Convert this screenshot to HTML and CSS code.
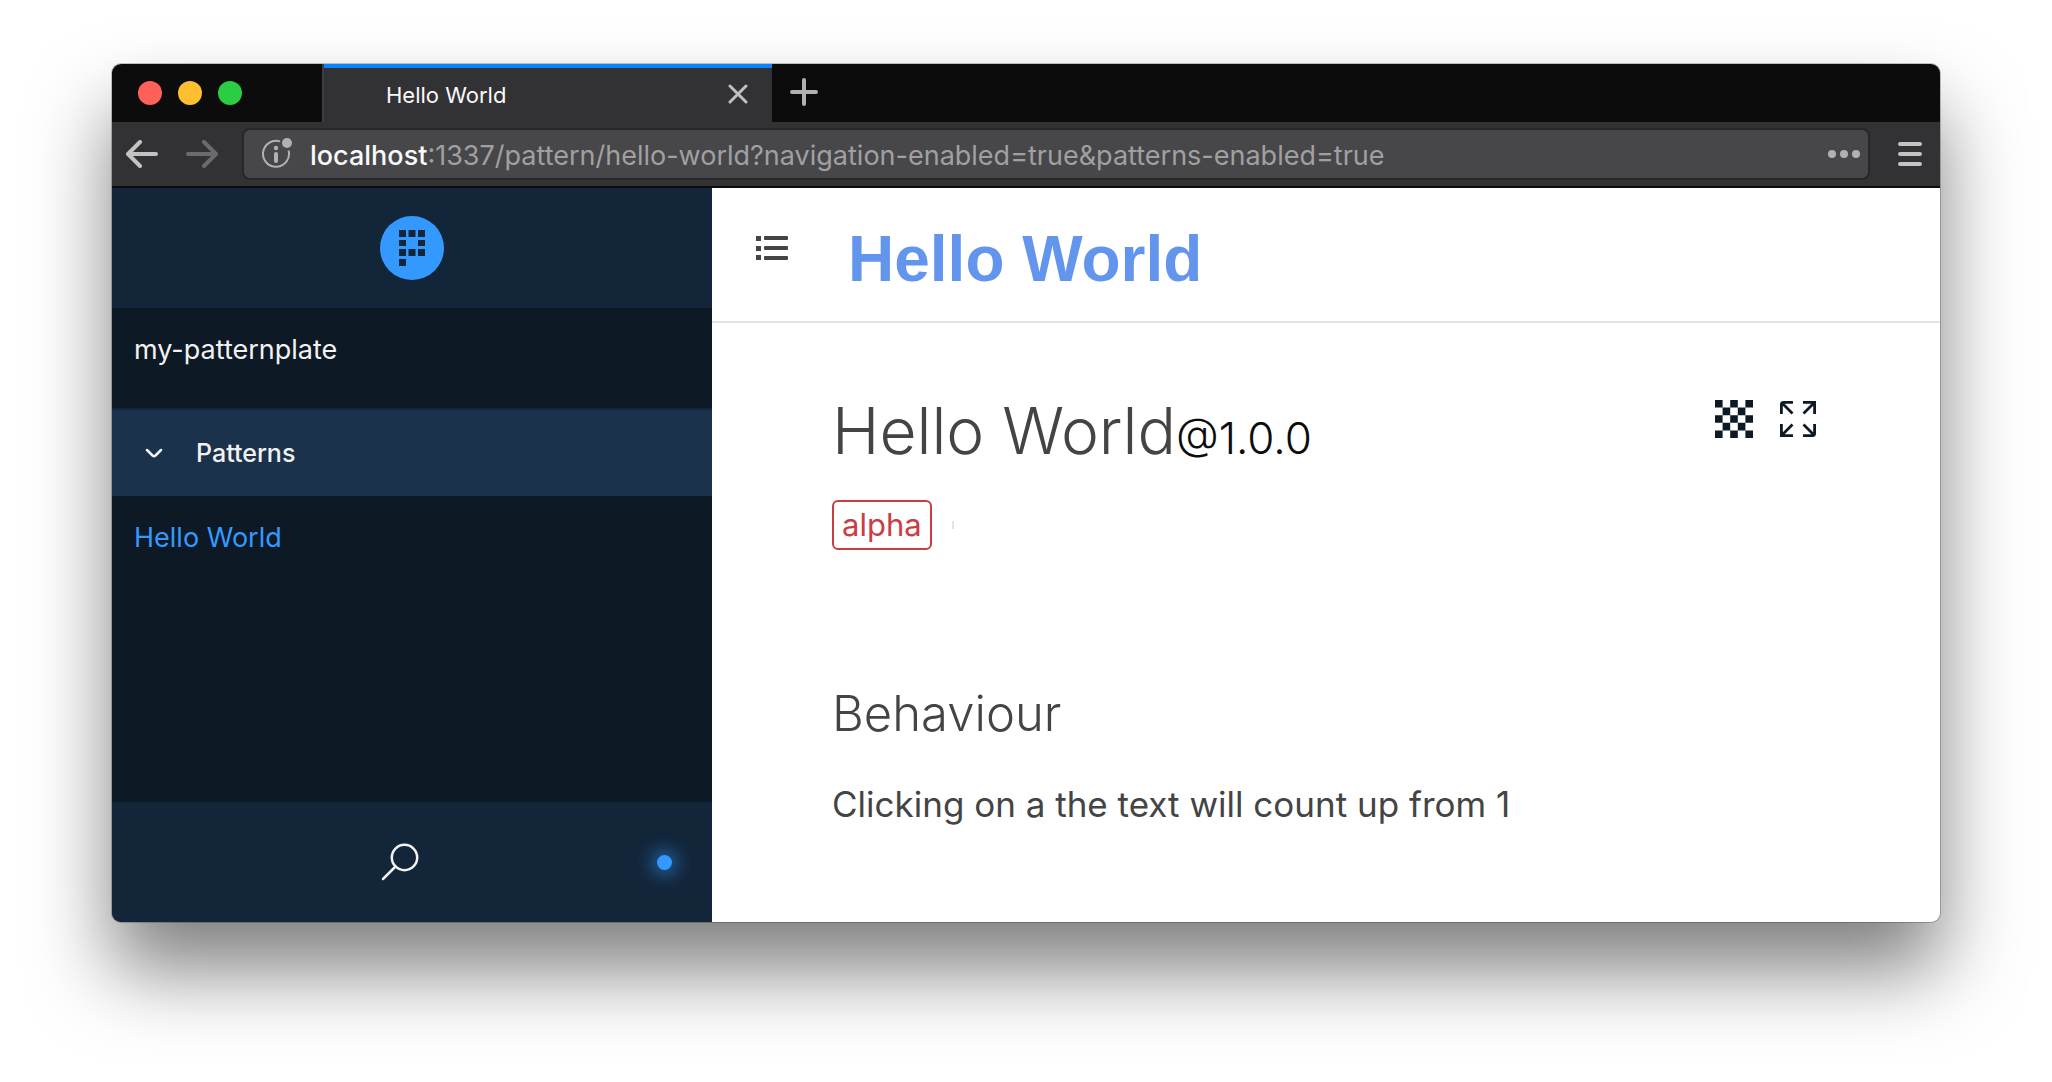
FILE: index.html
```html
<!DOCTYPE html>
<html lang="en">
<head>
<meta charset="utf-8">
<title>Hello World</title>
<link rel="stylesheet" href="styles.css">
</head>
<body>
<div class="window">
  <div class="tabbar">
    <div class="lights">
      <button class="light light-close" aria-label="Close window"></button>
      <button class="light light-min" aria-label="Minimise window"></button>
      <button class="light light-max" aria-label="Zoom window"></button>
    </div>
    <div class="tab">
      <span class="tab-title">Hello World</span>
      <button class="icon-button" aria-label="Close tab">
        <svg width="20" height="20" viewBox="0 0 20 20" fill="none" stroke="#c0c0c1" stroke-width="3" stroke-linecap="round"><path d="M2 2l16 16M18 2L2 18"/></svg>
      </button>
    </div>
    <button class="icon-button new-tab" aria-label="New tab">
      <svg width="28" height="28" viewBox="0 0 28 28" fill="none" stroke="#b1b1b2" stroke-width="4" stroke-linecap="round"><path d="M14 2v24M2 14h24"/></svg>
    </button>
  </div>
  <div class="toolbar">
    <button class="icon-button" aria-label="Back">
      <svg width="32" height="28" viewBox="0 0 32 28" fill="none" stroke="#c3c3c4" stroke-width="4" stroke-linecap="round" stroke-linejoin="round"><path d="M30 14H3M14 2L2 14l12 12"/></svg>
    </button>
    <button class="icon-button forward" aria-label="Forward">
      <svg width="32" height="28" viewBox="0 0 32 28" fill="none" stroke="#6b6b6d" stroke-width="4" stroke-linecap="round" stroke-linejoin="round"><path d="M2 14h27M18 2l12 12-12 12"/></svg>
    </button>
    <div class="address">
      <button class="icon-button" aria-label="Site information">
        <svg width="30" height="32" viewBox="0 0 30 32"><path d="M18 3.400A13 13 0 1 0 26.600 12.500" fill="none" stroke="#b1b1b3" stroke-width="2"/><circle cx="25" cy="5" r="5" fill="#b1b1b3"/><circle cx="14" cy="10" r="2.200" fill="#b1b1b3"/><path d="M14 16v7" stroke="#b1b1b3" stroke-width="4" stroke-linecap="round"/></svg>
      </button>
      <a class="url" href="#"><span class="host">localhost</span>:1337/pattern/hello-world?navigation-enabled=true&amp;patterns-enabled=true</a>
      <button class="icon-button" aria-label="Page actions">
        <svg width="32" height="8" viewBox="0 0 32 8" fill="#b1b1b3"><circle cx="4" cy="4" r="4"/><circle cx="16" cy="4" r="4"/><circle cx="28" cy="4" r="4"/></svg>
      </button>
    </div>
    <button class="icon-button" aria-label="Open menu">
      <svg width="24" height="24" viewBox="0 0 24 24" stroke="#c3c3c4" stroke-width="4" stroke-linecap="round"><path d="M2 2h20M2 12h20M2 22h20"/></svg>
    </button>
  </div>
  <div class="page">
    <aside class="sidebar">
      <header class="brand">
        <a href="#" aria-label="Home">
          <svg width="64" height="64" viewBox="0 0 64 64"><circle cx="32" cy="32" r="32" fill="#3399ff"/><path fill="#132539" d="M19 14h7v7h-7zM28.500 14h7v7h-7zM38 14h7v7h-7zM19 24h7v6h-7zM38 24h7v6h-7zM19 33h7v7h-7zM28.500 33h7v7h-7zM38 33h7v7h-7zM19 43h7v7h-7z"/></svg>
        </a>
      </header>
      <nav class="nav">
        <a class="nav-item nav-root" href="#">my-patternplate</a>
        <button class="nav-group">
          <svg width="18" height="10" viewBox="0 0 18 10" fill="none" stroke="#f2f2f2" stroke-width="2.500" stroke-linecap="round" stroke-linejoin="round"><path d="M2 2l5.500 5.500q1.500 1.200 3 0L16 2"/></svg>
          Patterns
        </button>
        <a class="nav-item nav-current" href="#">Hello World</a>
      </nav>
      <footer class="sidebar-footer">
        <button class="icon-button" aria-label="Search">
          <svg width="38" height="38" viewBox="0 0 38 38" fill="none" stroke="#f2f2f2" stroke-width="2.500" stroke-linecap="round"><circle cx="23.500" cy="14.500" r="12.700"/><path d="M14.500 23.500L2 36"/></svg>
        </button>
        <span class="status"></span>
      </footer>
    </aside>
    <main class="main">
      <header class="demo">
        <button class="icon-button" aria-label="Toggle navigation">
          <svg width="32" height="24" viewBox="0 0 32 24" fill="#444"><path d="M0 0h5v5H0zM0 10h5v5H0zM0 19h5v5H0z"/><rect x="8" y="0" width="24" height="4" rx="1"/><rect x="8" y="10" width="24" height="4" rx="1"/><rect x="8" y="20" width="24" height="4" rx="1"/></svg>
        </button>
        <strong class="demo-title">Hello World</strong>
      </header>
      <article class="doc">
        <div class="doc-head">
          <h1 class="doc-title">Hello World<small class="version">@1.0.0</small></h1>
          <div class="actions">
            <button class="icon-button" aria-label="Toggle opacity">
              <svg width="38" height="38" viewBox="0 0 5 5" fill="#0d1924"><path d="M0 0h1v1H0zM2 0h1v1H2zM4 0h1v1H4zM1 1h1v1H1zM3 1h1v1H3zM0 2h1v1H0zM2 2h1v1H2zM4 2h1v1H4zM1 3h1v1H1zM3 3h1v1H3zM0 4h1v1H0zM2 4h1v1H2zM4 4h1v1H4z"/></svg>
            </button>
            <button class="icon-button" aria-label="Fullscreen">
              <svg width="36" height="36" viewBox="0 0 36 36" fill="none" stroke="#0d1924" stroke-width="2.800"><path d="M13 1.400H3.400q-2 0-2 2V13M2 2l10.500 10.500M23 1.400h11.600V13M34 2L23.500 12.500M1.400 23v11.600H13M2 34l10.500-10.500M34.600 23v9.600q0 2-2 2H23M34 34L23.500 23.500"/></svg>
            </button>
          </div>
        </div>
        <div class="tags"><a class="tag" href="#">alpha</a><span class="divider"></span></div>
        <h2 class="section-title">Behaviour</h2>
        <p class="text">Clicking on a the text will count up from 1</p>
      </article>
    </main>
  </div>
</div>
</body>
</html>
```

FILE: styles.css
```css
* { box-sizing: border-box; }

body {
  margin: 0;
  padding: 64px 112px 160px;
  min-height: 100vh;
  display: flex;
  background: #fff;
  font-family: Inter, "Liberation Sans", sans-serif;
  color: #444;
}

a { color: inherit; text-decoration: none; }
svg { display: block; }

button {
  border: 0;
  padding: 0;
  background: none;
  font: inherit;
  color: inherit;
}

.icon-button { flex: none; }

.window {
  flex: 1;
  min-width: 0;
  display: flex;
  flex-direction: column;
  overflow: hidden;
  border-radius: 9px;
  background: #fff;
  box-shadow: 0 0 0 1px rgba(0, 0, 0, .22), 0 48px 80px rgba(0, 0, 0, .5);
}

.tabbar {
  display: flex;
  height: 58px;
  background: #0c0c0d;
}

.lights {
  display: flex;
  align-items: center;
  gap: 16px;
  width: 210px;
  padding-left: 26px;
}

.light { width: 24px; height: 24px; border-radius: 50%; }
.light-close { background: #ff6159; }
.light-min { background: #ffbf2f; }
.light-max { background: #29ce42; }

.tab {
  display: flex;
  align-items: center;
  justify-content: space-between;
  width: 450px;
  padding: 2px 24px 0 62px;
  background: #323234;
  border-left: 2px solid #3d3d3f;
  box-shadow: inset 0 4px #0a84ff;
}

.tab-title { font-size: 22px; line-height: 28px; padding-top: 2px; color: #f9f9fa; }
.new-tab { padding: 0 18px 2px; }

.toolbar {
  display: flex;
  align-items: center;
  height: 66px;
  padding: 0 18px 2px 14px;
  background: #323234;
  box-shadow: inset 0 -2px #0c0c0d;
}

.forward { margin: 0 24px 0 28px; }

.address {
  flex: 1;
  min-width: 0;
  display: flex;
  align-items: center;
  height: 52px;
  margin-right: 28px;
  padding: 0 8px 0 18px;
  border: 2px solid #28282a;
  border-radius: 8px;
  background: #474749;
}

.url {
  flex: 1;
  min-width: 0;
  overflow: hidden;
  margin-left: 18px;
  padding-top: 3px;
  font-size: 27px;
  line-height: 36px;
  white-space: nowrap;
  color: #a0a0a2;
}

.host { color: #f9f9fa; font-weight: 500; }

.page { flex: 1; display: flex; }

.sidebar {
  flex: 0 1 600px;
  display: flex;
  flex-direction: column;
  background: #0d1924;
  color: #f2f2f2;
}

.brand {
  display: flex;
  align-items: center;
  justify-content: center;
  height: 120px;
  background: #132539;
}

.nav { flex: 1; display: flex; flex-direction: column; font-size: 27px; line-height: 40px; }
.nav-item { padding: 22px; }
.nav-root { padding-bottom: 38px; }

.nav-group {
  display: flex;
  align-items: center;
  gap: 33px;
  height: 88px;
  padding: 0 33px;
  border-top: 2px solid #132539;
  background: #1a324b;
  font-size: 25px;
  font-weight: 500;
}

.nav-current { color: #3399ff; }

.sidebar-footer {
  display: grid;
  grid-template-columns: 1fr auto 1fr;
  align-items: center;
  height: 120px;
  padding: 0 40px 0 15px;
  background: #132539;
}

.sidebar-footer .icon-button { grid-column: 2; }

.status {
  justify-self: end;
  width: 15px;
  height: 15px;
  border-radius: 50%;
  background: #3399ff;
  box-shadow: 0 0 20px 2px #3399ff;
}

.main { flex: 1; min-width: 0; }

.demo {
  display: flex;
  align-items: center;
  height: 135px;
  padding: 0 44px;
  border-bottom: 2px solid #e4e4e4;
}

.demo .icon-button { padding-bottom: 13px; }

.demo-title {
  margin-left: 60px;
  padding-top: 8px;
  font-family: "Liberation Sans", Arial, sans-serif;
  font-size: 64px;
  line-height: 74px;
  color: #6495ed;
}

.doc { padding: 64px 120px 80px; }
.doc-head { display: flex; justify-content: space-between; align-items: flex-start; }

.doc-title {
  margin: 0;
  font-size: 64px;
  line-height: 88px;
  font-weight: 300;
}

.version { font-size: 44px; line-height: 1; color: #0c0c0d; }
.actions { display: flex; gap: 27px; padding: 13px 4px; }

.tags { display: flex; align-items: center; gap: 20px; margin-top: 25px; }

.tag {
  padding: 4px 8px;
  border: 2px solid #cc3d43;
  border-radius: 6px;
  font-size: 31px;
  line-height: 38px;
  color: #cc3d43;
}

.divider { width: 2px; height: 8px; background: #e4e4e4; }

.section-title {
  margin: 132px 0 0;
  font-size: 49px;
  line-height: 64px;
  font-weight: 300;
}

.text { margin: 34px 0 0; font-size: 35px; line-height: 48px; }
```
